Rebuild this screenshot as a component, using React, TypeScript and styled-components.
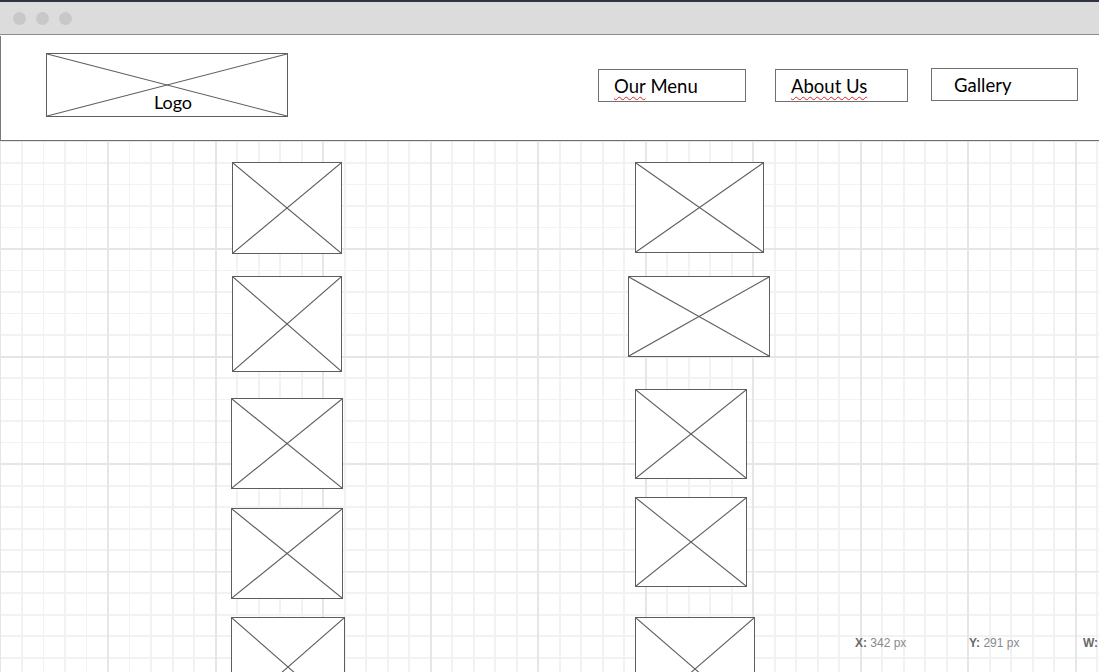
import styled, { createGlobalStyle } from "styled-components";

const GlobalStyle = createGlobalStyle`
  html, body {
    margin: 0;
    padding: 0;
    background: #ffffff;
  }
  body {
    font-family: Lato, "Open Sans", sans-serif;
    color: #000;
  }
`;

type BoxProps = { $w: number; $h: number; $mt: number; $dx: number };

const leftBoxes = [
  { w: 110, h: 92, mt: 21, dx: 1 },
  { w: 110, h: 96, mt: 22, dx: 1 },
  { w: 112, h: 91, mt: 26, dx: 0 },
  { w: 112, h: 91, mt: 19, dx: 0 },
  { w: 114, h: 100, mt: 18, dx: 0 },
];

const rightBoxes = [
  { w: 129, h: 91, mt: 21, dx: 7 },
  { w: 142, h: 81, mt: 23, dx: 0 },
  { w: 112, h: 90, mt: 32, dx: 7 },
  { w: 112, h: 90, mt: 18, dx: 7 },
  { w: 120, h: 104, mt: 30, dx: 7 },
];

// the X drawn across every image placeholder
const Cross = () => (
  <CrossSvg viewBox="0 0 100 100" preserveAspectRatio="none">
    <line x1="0" y1="0" x2="100" y2="100" vectorEffect="non-scaling-stroke" />
    <line x1="100" y1="0" x2="0" y2="100" vectorEffect="non-scaling-stroke" />
  </CrossSvg>
);

const App = () => {
  return (
    <>
      <GlobalStyle />
      <Window>
        <TitleBar>
          <Dot />
          <Dot />
          <Dot />
        </TitleBar>
        <Header>
          <LogoBox>
            <Cross />
            <LogoText>Logo</LogoText>
          </LogoBox>
          <Nav>
            <NavButton $w={148}>
              <Squiggle>Our</Squiggle>&nbsp;Menu
            </NavButton>
            <NavButton $w={133} $ml={29}>
              <Squiggle>About Us</Squiggle>
            </NavButton>
            <NavButton $w={147} $ml={23} $up $pad={22}>
              Gallery
            </NavButton>
          </Nav>
        </Header>
        <Canvas>
          <Column>
            {leftBoxes.map((b, i) => (
              <Placeholder key={i} $w={b.w} $h={b.h} $mt={b.mt} $dx={b.dx}>
                <Cross />
              </Placeholder>
            ))}
          </Column>
          <Column>
            {rightBoxes.map((b, i) => (
              <Placeholder key={i} $w={b.w} $h={b.h} $mt={b.mt} $dx={b.dx}>
                <Cross />
              </Placeholder>
            ))}
          </Column>
          <Status>
            <StatusItem>
              <b>X:</b> 342 px
            </StatusItem>
            <StatusItem>
              <b>Y:</b> 291 px
            </StatusItem>
            <StatusItem>
              <b>W:</b>
            </StatusItem>
          </Status>
        </Canvas>
      </Window>
    </>
  );
};

const Window = styled.div`
  width: 1099px;
  height: 672px;
  overflow: hidden;
  display: flex;
  flex-direction: column;
  background: #fff;
`;

const TitleBar = styled.div`
  flex: none;
  height: 32px;
  box-sizing: content-box;
  border-top: 2px solid #2e3444;
  border-bottom: 1px solid #8c8c8c;
  background: #dcdcdc;
  display: flex;
  align-items: center;
  gap: 10px;
  padding-left: 13px;
`;

const Dot = styled.span`
  width: 13px;
  height: 13px;
  border-radius: 50%;
  background: #c8c8c8;
`;

const Header = styled.header`
  flex: none;
  height: 105px;
  box-sizing: border-box;
  margin-top: 1px;
  border-left: 1px solid #7a7a7a;
  border-bottom: 1px solid #6e6e6e;
  display: flex;
  align-items: flex-start;
  padding: 17px 21px 0 45px;
`;

const CrossSvg = styled.svg`
  position: absolute;
  inset: 0;
  width: 100%;
  height: 100%;
  stroke: #5e5e5e;
  stroke-width: 1.1;
  pointer-events: none;
`;

const LogoBox = styled.div`
  position: relative;
  width: 242px;
  height: 64px;
  box-sizing: border-box;
  border: 1px solid #5e5e5e;
  display: flex;
  align-items: flex-end;
  justify-content: center;
  padding: 0 0 3px 12px;
`;

const LogoText = styled.span`
  position: relative;
  font-size: 18px;
  line-height: 22px;
`;

const Nav = styled.nav`
  margin-left: auto;
  display: flex;
  align-items: flex-start;
  padding-top: 16px;
`;

const NavButton = styled.div<{ $w: number; $ml?: number; $up?: boolean; $pad?: number }>`
  width: ${(p) => p.$w}px;
  height: 33px;
  box-sizing: border-box;
  border: 1px solid #707070;
  margin-left: ${(p) => p.$ml ?? 0}px;
  margin-top: ${(p) => (p.$up ? -1 : 0)}px;
  padding-left: ${(p) => p.$pad ?? 15}px;
  display: flex;
  align-items: center;
  font-size: 18.5px;
  white-space: nowrap;
`;

const Squiggle = styled.span`
  text-decoration: underline wavy #e0201a;
  text-decoration-thickness: 1px;
  text-underline-offset: 3px;
`;

const Canvas = styled.main`
  position: relative;
  flex: 1;
  overflow: hidden;
  display: grid;
  grid-template-columns: 397px 1fr;
  align-items: start;
  padding-left: 231px;
  background-color: #fff;
  background-image:
    repeating-linear-gradient(to right, #e6e6e6 0 1.5px, transparent 1.5px 107.5px),
    repeating-linear-gradient(to bottom, #e6e6e6 0 1.5px, transparent 1.5px 107.5px),
    repeating-linear-gradient(to right, #f2f2f2 0 1.5px, transparent 1.5px 21.5px),
    repeating-linear-gradient(to bottom, #f2f2f2 0 1.5px, transparent 1.5px 21.5px);
`;

const Column = styled.div`
  display: flex;
  flex-direction: column;
  align-items: flex-start;
`;

const Placeholder = styled.div<BoxProps>`
  position: relative;
  flex: none;
  width: ${(p) => p.$w}px;
  height: ${(p) => p.$h}px;
  margin-top: ${(p) => p.$mt}px;
  margin-left: ${(p) => p.$dx}px;
  box-sizing: border-box;
  border: 1px solid #5e5e5e;
  background: #fff;
`;

const Status = styled.div`
  position: absolute;
  left: 855px;
  bottom: 22px;
  display: flex;
  font-family: "Liberation Sans", Arial, sans-serif;
  font-size: 12px;
  color: #8a8a8a;
`;

const StatusItem = styled.span`
  width: 114px;
  white-space: nowrap;
  b {
    color: #6a6a6a;
  }
`;

export default App;
